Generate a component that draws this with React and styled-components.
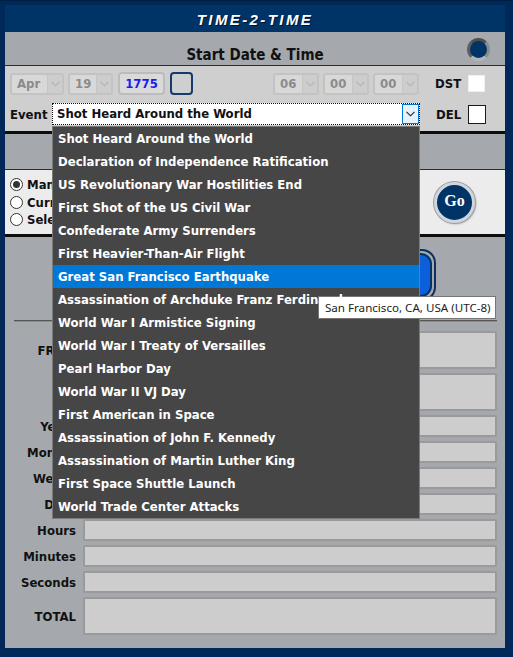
import React from "react";
import styled, { createGlobalStyle } from "styled-components";

const font = `"DejaVu Sans Condensed", "DejaVu Sans", sans-serif`;

const GlobalStyle = createGlobalStyle`
  html, body {
    margin: 0;
    padding: 0;
    background: #00295a;
  }
  body {
    font-family: ${font};
  }
  * {
    box-sizing: border-box;
  }
`;

const events = [
  "Shot Heard Around the World",
  "Declaration of Independence Ratification",
  "US Revolutionary War Hostilities End",
  "First Shot of the US Civil War",
  "Confederate Army Surrenders",
  "First Heavier-Than-Air Flight",
  "Great San Francisco Earthquake",
  "Assassination of Archduke Franz Ferdinand",
  "World War I Armistice Signing",
  "World War I Treaty of Versailles",
  "Pearl Harbor Day",
  "World War II VJ Day",
  "First American in Space",
  "Assassination of John F. Kennedy",
  "Assassination of Martin Luther King",
  "First Space Shuttle Launch",
  "World Trade Center Attacks",
];

const results = [
  { label: "FROM", tall: true },
  { label: "TO", tall: true },
  { label: "Years" },
  { label: "Months" },
  { label: "Weeks" },
  { label: "Days" },
  { label: "Hours" },
  { label: "Minutes" },
  { label: "Seconds" },
  { label: "TOTAL", tall: true },
];

const Frame = styled.div`
  width: 513px;
  height: 657px;
  background: #00295a;
  padding: 4px 8px 9px 5px;
  display: flex;
  flex-direction: column;
  font-family: ${font};
  border-top: 1px solid #001d40;
`;

const Header = styled.div`
  height: 27px;
  background: #003366;
  display: flex;
  align-items: center;
  justify-content: center;
  padding-top: 2px;
  color: #fff;
  font: italic bold 15px "Liberation Sans", Arial, sans-serif;
  letter-spacing: 2.4px;
  text-shadow: 1px 1px 0 #00132b;
`;

const Panel = styled.div`
  flex: 1;
  background: #a5a9ae;
  display: flex;
  flex-direction: column;
`;

const TitleBar = styled.div`
  height: 34px;
  display: grid;
  grid-template-columns: 1fr auto 1fr;
  align-items: center;
  border-bottom: 1px solid #0b3465;
`;

const Title = styled.h2`
  grid-column: 2;
  margin: 0;
  align-self: end;
  padding-bottom: 1px;
  font-size: 15px;
  font-weight: bold;
  color: #111;
`;

const Orb = styled.button`
  grid-column: 3;
  justify-self: end;
  margin: 2px 15px 0 0;
  width: 23px;
  height: 23px;
  padding: 0;
  border-radius: 50%;
  border: 3px solid;
  border-color: #4f4f4f #8c8c8c #b5b5b5 #5e5e5e;
  background: #003366;
`;

const StartBody = styled.div`
  background: #cfcfcf;
  padding: 6px 0 6px 5px;
  display: flex;
  flex-direction: column;
  gap: 8px;
`;

const Row = styled.div`
  display: flex;
  align-items: center;
  height: ${(p) => p.h}px;
  gap: ${(p) => p.gap || 0}px;
`;

const DateSelect = styled.div`
  width: ${(p) => p.w}px;
  height: 22px;
  display: flex;
  border: 2px solid #c3c3c3;
  border-radius: 3px;
  background: #d8d8d8;
  overflow: hidden;
`;

const SelectValue = styled.span`
  flex: 1;
  padding-left: 5px;
  line-height: 18px;
  font-size: 13px;
  font-weight: bold;
  color: #8b8b8b;
`;

const SelectArrow = styled.span`
  width: 15px;
  display: flex;
  align-items: center;
  justify-content: center;
  background: #cdcdcd;
  border-left: 1px solid #c6c6c6;
`;

const YearBox = styled.div`
  width: 47px;
  height: 23px;
  margin-left: 1px;
  border: 2px solid #bcbcbc;
  border-radius: 4px;
  background: #dadada;
  display: flex;
  align-items: center;
  justify-content: center;
  font-size: 13px;
  font-weight: bold;
  color: #1c1cf0;
`;

const PickerBox = styled.div`
  width: 23px;
  height: 23px;
  margin-left: 1px;
  border: 2px solid #163a6b;
  border-radius: 4px;
`;

const TimeGroup = styled.div`
  display: flex;
  gap: 4px;
  margin-left: 76px;
`;

const CheckGroup = styled.label`
  width: 50px;
  margin-left: ${(p) => p.ml}px;
  display: flex;
  align-items: center;
  justify-content: space-between;
  font-size: 13px;
  font-weight: bold;
  color: #111;
`;

const CheckBox = styled.span`
  width: ${(p) => (p.framed ? 18 : 17)}px;
  height: ${(p) => (p.framed ? 19 : 17)}px;
  background: #fff;
  border: 1px solid ${(p) => (p.framed ? "#1a1a1a" : "#f0f0f0")};
`;

const FieldLabel = styled.span`
  width: 42px;
  font-size: 13px;
  font-weight: bold;
  color: #111;
`;

const EventSelect = styled.div`
  position: relative;
  width: 368px;
  height: 22px;
  display: flex;
  background: #fff;
  border: 1px dotted #111;
`;

const EventValue = styled.span`
  flex: 1;
  padding-left: 4px;
  line-height: 20px;
  font-size: 13px;
  font-weight: bold;
  color: #111;
`;

const EventArrow = styled.span`
  width: 17px;
  display: flex;
  align-items: center;
  justify-content: center;
  background: #e5f1fb;
  border: 1px solid #0078d7;
`;

const DropList = styled.ul`
  position: absolute;
  z-index: 20;
  top: calc(100% + 2px);
  left: -1px;
  width: 368px;
  margin: 0;
  padding: 0;
  list-style: none;
  background: #464646;
  border: 1px solid #7a7a7a;
`;

const DropItem = styled.li`
  position: relative;
  height: 23px;
  line-height: 23px;
  padding-left: 5px;
  white-space: nowrap;
  font-size: 13px;
  font-weight: bold;
  color: #fff;
  background: ${(p) => (p.active ? "#0078d7" : "transparent")};
`;

const Tooltip = styled.div`
  position: absolute;
  left: 265px;
  top: 31px;
  width: 178px;
  height: 23px;
  display: flex;
  align-items: center;
  padding-left: 6px;
  background: #fff;
  border: 1px solid #767676;
  font: 11.6px "Noto Sans", "Open Sans", sans-serif;
  font-weight: normal;
  color: #222;
`;

const Rule = styled.div`
  height: 3px;
  background: #0d0d0d;
`;

const MidArea = styled.div`
  height: 36px;
  display: flex;
  align-items: center;
  justify-content: center;
  font-size: 13px;
  font-weight: bold;
  color: #111;
  border-bottom: 1px solid #0b3465;
`;

const ModeSection = styled.div`
  height: 64px;
  background: #ececec;
  display: flex;
  align-items: center;
  justify-content: space-between;
  padding: 0 30px 0 5px;
`;

const RadioList = styled.div`
  display: flex;
  flex-direction: column;
`;

const RadioRow = styled.label`
  height: 17.5px;
  display: flex;
  align-items: center;
  gap: 4px;
  font-size: 13px;
  font-weight: bold;
  color: #111;
`;

const RadioDot = styled.span`
  width: 13px;
  height: 13px;
  border-radius: 50%;
  border: 1px solid #333;
  background: #fff;
  display: flex;
  align-items: center;
  justify-content: center;
  &::after {
    content: "";
    width: 7px;
    height: 7px;
    border-radius: 50%;
    background: ${(p) => (p.checked ? "#333" : "transparent")};
  }
`;

const GoButton = styled.button`
  width: 41px;
  height: 41px;
  padding: 0 0 2px;
  border-radius: 50%;
  border: 3px solid #d2d6db;
  background: #003366;
  color: #fff;
  font: bold 16px "Liberation Serif", "DejaVu Serif", serif;
  box-shadow: 0 0 0 1px #9aa0a6, 1px 1px 2px rgba(0, 0, 0, 0.35);
`;

const LowerArea = styled.div`
  padding-top: 12px;
  display: flex;
  flex-direction: column;
`;

const CalcButton = styled.button`
  width: 362px;
  height: 52px;
  margin: 0 auto;
  padding: 2px;
  border-radius: 14px;
  border: 2px solid #0b2f5e;
  background: #a5a9ae;
`;

const CalcFace = styled.span`
  height: 100%;
  display: flex;
  align-items: center;
  justify-content: center;
  border-radius: 11px;
  border: 2px solid #003366;
  background: linear-gradient(90deg, #1668e3, #0c5fd8);
  color: #fff;
  font-size: 15px;
  font-weight: bold;
`;

const Divider = styled.div`
  margin: 19px 8px 0 9px;
  border-top: 1px solid #555;
  border-bottom: 1px solid #8a8d92;
`;

const ResultGrid = styled.div`
  margin-top: 9px;
  padding-right: 8px;
  display: grid;
  grid-template-columns: 71px 1fr;
  column-gap: 7px;
  row-gap: 4px;
`;

const ResultLabel = styled.span`
  align-self: center;
  text-align: right;
  font-size: 13px;
  font-weight: bold;
  color: #111;
`;

const ResultField = styled.div`
  height: ${(p) => (p.tall ? 38 : 22)}px;
  background: #cdcdcd;
  border: 2px solid #9a9a9a;
  border-radius: 2px;
`;

const Chevron = ({ color }) => (
  <svg width="9" height="6" viewBox="0 0 9 6">
    <path d="M0.5 0.8 L4.5 4.8 L8.5 0.8" fill="none" stroke={color} strokeWidth="1.1" />
  </svg>
);

const Select = ({ w, value }) => (
  <DateSelect w={w}>
    <SelectValue>{value}</SelectValue>
    <SelectArrow>
      <Chevron color="#b3b3b3" />
    </SelectArrow>
  </DateSelect>
);

export default function App() {
  return (
    <>
      <GlobalStyle />
      <Frame>
        <Header>TIME-2-TIME</Header>
        <Panel>
          <TitleBar>
            <Title>Start Date &amp; Time</Title>
            <Orb aria-label="options" />
          </TitleBar>

          <StartBody>
            <Row h={23} gap={4}>
              <Select w={54} value="Apr" />
              <Select w={45} value="19" />
              <YearBox>1775</YearBox>
              <PickerBox />
              <TimeGroup>
                <Select w={46} value="06" />
                <Select w={46} value="00" />
                <Select w={46} value="00" />
              </TimeGroup>
              <CheckGroup ml={12}>
                DST
                <CheckBox />
              </CheckGroup>
            </Row>
            <Row h={22}>
              <FieldLabel>Event</FieldLabel>
              <EventSelect>
                <EventValue>Shot Heard Around the World</EventValue>
                <EventArrow>
                  <Chevron color="#222" />
                </EventArrow>
                <DropList>
                  {events.map((ev, i) => (
                    <DropItem key={ev} active={i === 6}>
                      {ev}
                      {i === 6 && <Tooltip>San Francisco, CA, USA (UTC-8)</Tooltip>}
                    </DropItem>
                  ))}
                </DropList>
              </EventSelect>
              <CheckGroup ml={16}>
                DEL
                <CheckBox framed />
              </CheckGroup>
            </Row>
          </StartBody>

          <Rule />
          <MidArea>End Date &amp; Time</MidArea>

          <ModeSection>
            <RadioList>
              <RadioRow>
                <RadioDot checked />
                Manual Entry
              </RadioRow>
              <RadioRow>
                <RadioDot />
                Current Date &amp; Time
              </RadioRow>
              <RadioRow>
                <RadioDot />
                Selected Event
              </RadioRow>
            </RadioList>
            <GoButton>Go</GoButton>
          </ModeSection>
          <Rule />

          <LowerArea>
            <CalcButton>
              <CalcFace>Calculate</CalcFace>
            </CalcButton>
            <Divider />
            <ResultGrid>
              {results.map((r) => (
                <React.Fragment key={r.label}>
                  <ResultLabel>{r.label}</ResultLabel>
                  <ResultField tall={r.tall} />
                </React.Fragment>
              ))}
            </ResultGrid>
          </LowerArea>
        </Panel>
      </Frame>
    </>
  );
}
